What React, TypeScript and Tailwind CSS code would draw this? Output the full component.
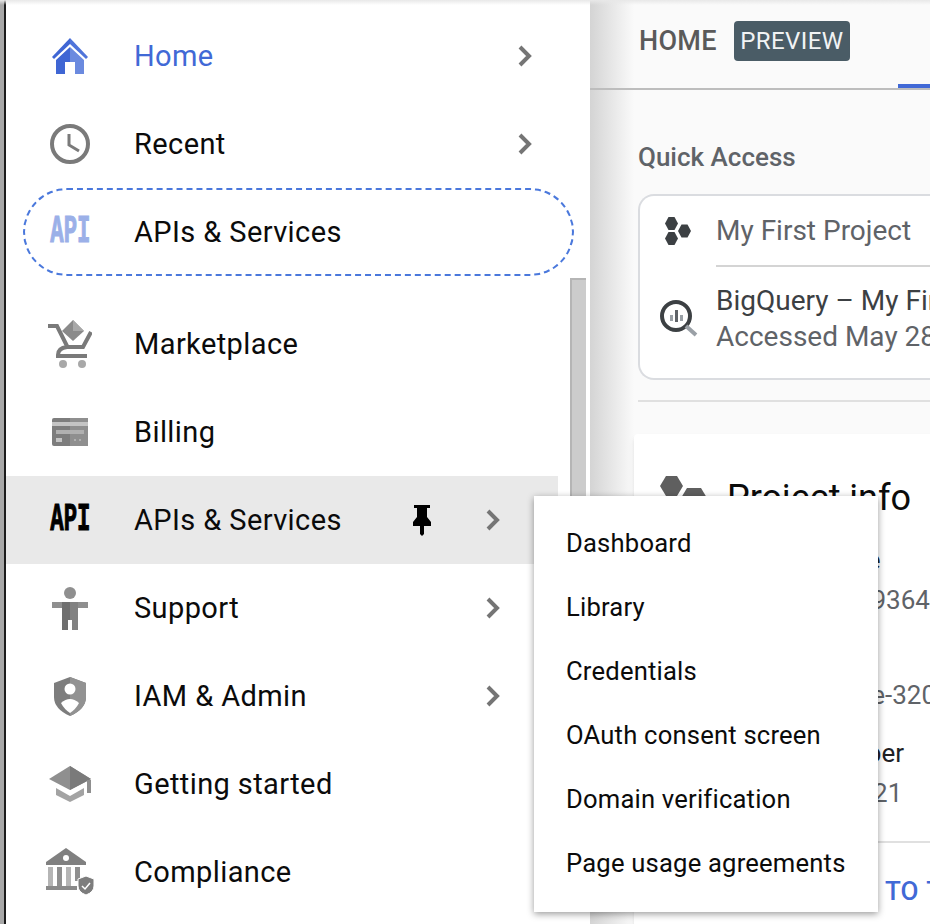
import React from 'react';

const menuItems = ['Dashboard', 'Library', 'Credentials', 'OAuth consent screen', 'Domain verification', 'Page usage agreements'];

const HomeIcon = () => (
  <svg width="36" height="36" viewBox="0 0 36 36">
    <path d="M18 0 L0 19 L2 21 L18 6 Z" fill="#3f66d4" />
    <path d="M18 0 L36 19 L34 21 L18 6 Z" fill="#4f74da" />
    <path d="M18 9 L4 22 V36 H13 V24 H18 Z" fill="#3f66d4" />
    <path d="M18 9 L32 22 V36 H23 V24 H18 Z" fill="#6b8adf" />
  </svg>
);

const ClockIcon = () => (
  <svg width="40" height="40" viewBox="0 0 40 40" fill="none" stroke="#7a7a7a">
    <circle cx="20" cy="20" r="18" strokeWidth="4" />
    <path d="M19 10 V21 L29 27" strokeWidth="3" />
  </svg>
);

const ApiGlyph = ({ color }: { color: string }) => (
  <span
    className="font-['Liberation_Mono',monospace] text-[36px] leading-none font-bold scale-x-[0.62] scale-y-[1.08] [-webkit-text-stroke:1px_currentColor]"
    style={{ color }}
  >
    API
  </span>
);

const CartIcon = () => (
  <svg width="44" height="48" viewBox="0 0 44 48">
    <path d="M25 0 L36 11 L25 21 L14 11 Z" fill="#8a8a8a" />
    <path d="M25 0 L36 11 L25 11 Z" fill="#a8a8a8" />
    <path d="M0 6 H9 L19 26" fill="none" stroke="#7a7a7a" strokeWidth="4" />
    <path d="M43 12 L35 27 H19 Q10 28 10 35 V36 H39" fill="none" stroke="#7a7a7a" strokeWidth="4" />
    <circle cx="15" cy="44" r="4" fill="#a8a8a8" />
    <circle cx="34" cy="44" r="4" fill="#a8a8a8" />
  </svg>
);

const BillingIcon = () => (
  <svg width="36" height="28" viewBox="0 0 36 28">
    <rect width="36" height="28" rx="2" fill="#7d7d7d" />
    <rect x="18" width="18" height="28" fill="#8f8f8f" />
    <rect y="4" width="36" height="4" fill="#c4c4c4" />
    <rect x="4" y="12" width="28" height="4" fill="#b0b0b0" />
    <rect x="4" y="20" width="6" height="4" fill="#c4c4c4" />
    <rect x="22" y="21" width="2" height="2" fill="#b0b0b0" />
    <rect x="27" y="21" width="2" height="2" fill="#b0b0b0" />
  </svg>
);

const SupportIcon = () => (
  <svg width="36" height="43" viewBox="0 0 36 43">
    <circle cx="18" cy="6" r="6" fill="#8f8f8f" />
    <rect y="15" width="36" height="6" fill="#8f8f8f" />
    <path d="M10 15 H18 V43 H10 Z" fill="#6f6f6f" />
    <path d="M18 15 H26 V43 H18 Z" fill="#828282" />
    <rect x="16" y="33" width="4" height="10" fill="#ffffff" />
  </svg>
);

const ShieldIcon = () => (
  <svg width="32" height="39" viewBox="0 0 32 39">
    <path d="M16 0 L32 6 V20 Q32 32 16 39 Q0 32 0 20 V6 Z" fill="#7d7d7d" />
    <path d="M16 0 L32 6 V20 Q32 32 16 39 Z" fill="#929292" />
    <circle cx="16" cy="12" r="5.5" fill="#ffffff" />
    <path d="M7 26 Q16 18 25 26 Q22 32 16 36 Q10 32 7 26 Z" fill="#ffffff" />
  </svg>
);

const CapIcon = () => (
  <svg width="42" height="36" viewBox="0 0 42 36">
    <path d="M21 0 L42 13 L21 24 L0 13 Z" fill="#8f8f8f" />
    <path d="M21 0 L42 13 L21 24 Z" fill="#7a7a7a" />
    <path d="M7 22 L21 30 L35 22 V29 L21 36 L7 29 Z" fill="#a3a3a3" />
    <rect x="38" y="14" width="4" height="13" fill="#8f8f8f" />
  </svg>
);

const ComplianceIcon = () => (
  <svg width="48" height="48" viewBox="0 0 48 48">
    <path d="M20 0 L40 14 V17 H0 V14 Z" fill="#808080" />
    <circle cx="20" cy="10" r="3" fill="#ffffff" />
    <rect x="2" y="19" width="5" height="19" fill="#b5b5b5" />
    <rect x="11" y="19" width="5" height="19" fill="#8f8f8f" />
    <rect x="20" y="19" width="5" height="19" fill="#b5b5b5" />
    <rect x="29" y="19" width="5" height="14" fill="#8f8f8f" />
    <rect y="38" width="31" height="4" fill="#8a8a8a" />
    <path d="M40 28 L48 31 V38 Q48 44 40 47 Q32 44 32 38 V31 Z" fill="#7d7d7d" stroke="#ffffff" strokeWidth="1" />
    <path d="M36 38 L39 41 L44 35" fill="none" stroke="#ffffff" strokeWidth="1.5" />
  </svg>
);

const PinIcon = () => (
  <svg width="20" height="31" viewBox="0 0 20 31">
    <path d="M2 0 H18 V3 H15 V12 L19 17 V21 H12 V29 L10 31 L8 29 V21 H1 V17 L5 12 V3 H2 Z" fill="#000000" />
  </svg>
);

const Chevron = () => (
  <svg width="16" height="22" viewBox="0 0 16 22" fill="none" stroke="#757575" strokeWidth="4">
    <path d="M3 2 L12 11 L3 20" />
  </svg>
);

const HexIcon = () => (
  <svg width="26" height="28" viewBox="0 0 26 28" fill="#3c4043">
    <path d="M0 6.5 L3.5 0 H9.5 L13 6.5 L9.5 13 H3.5 Z" />
    <path d="M0 6.5 L3.5 0 H9.5 L13 6.5 L9.5 13 H3.5 Z" transform="translate(0 15)" />
    <path d="M0 6.5 L3.5 0 H9.5 L13 6.5 L9.5 13 H3.5 Z" transform="translate(13 7.5)" />
  </svg>
);

const BigQueryIcon = () => (
  <svg width="38" height="38" viewBox="0 0 38 38" fill="none">
    <circle cx="16" cy="16" r="14" stroke="#3c4043" strokeWidth="4" />
    <path d="M26 26 L36 35" stroke="#9aa0a6" strokeWidth="4" />
    <rect x="15" y="10" width="3" height="12" fill="#5f6368" />
    <rect x="10" y="15" width="3" height="6" fill="#9aa0a6" />
    <rect x="20" y="15" width="3" height="6" fill="#9aa0a6" />
  </svg>
);

const NavRow = ({
  icon,
  label,
  active,
  pin,
  chevron,
  hover,
}: {
  icon: React.ReactNode;
  label: string;
  active?: boolean;
  pin?: boolean;
  chevron?: 'near' | 'far';
  hover?: boolean;
}) => (
  <div className={`h-[88px] flex items-center w-[552px] ${hover ? 'bg-[#e9e9e9]' : ''}`}>
    <div className="w-[128px] flex justify-center shrink-0">{icon}</div>
    <span className={`text-[29px] leading-none tracking-[0.4px] ${active ? 'text-[#4169d6]' : 'text-[#0b0b0b]'}`}>{label}</span>
    <div className="flex-1" />
    {pin && <div className="mr-[53px] flex items-center"><PinIcon /></div>}
    {chevron === 'far' && <div className="mr-[57px]"><Chevron /></div>}
    {chevron === 'near' && <div className="mr-[25px]"><Chevron /></div>}
  </div>
);

const InfoPair = ({ label, value, className }: { label: string; value: string; className?: string }) => (
  <div className={`whitespace-nowrap text-[26px] leading-[40px] ${className ?? ''}`}>
    <div className="text-[#202124]">{label}</div>
    <div className="text-[#5f6368]">{value}</div>
  </div>
);

export default function App() {
  return (
    <div className="relative flex h-[924px] w-[930px] overflow-hidden bg-white font-['Roboto',sans-serif]">
      {/* window edge */}
      <div className="w-[6px] shrink-0 border-r-2 border-[#1c1c1c] bg-[#a8a8a8]" />

      {/* nav drawer */}
      <div className="relative w-[584px] shrink-0 bg-white pt-3">
        <NavRow icon={<HomeIcon />} label="Home" active chevron="near" />
        <NavRow icon={<ClockIcon />} label="Recent" chevron="near" />
        <div className="relative">
          <NavRow icon={<ApiGlyph color="#9bb0e8" />} label="APIs & Services" />
          <div className="absolute left-[17px] top-0 h-[88px] w-[551px] rounded-[44px] border-2 border-dashed border-[#4a78dc]" />
        </div>
        <div className="h-6" />
        <NavRow icon={<CartIcon />} label="Marketplace" />
        <NavRow icon={<BillingIcon />} label="Billing" />
        <NavRow icon={<ApiGlyph color="#000000" />} label="APIs & Services" pin chevron="far" hover />
        <NavRow icon={<SupportIcon />} label="Support" chevron="far" />
        <NavRow icon={<ShieldIcon />} label="IAM & Admin" chevron="far" />
        <NavRow icon={<CapIcon />} label="Getting started" />
        <NavRow icon={<ComplianceIcon />} label="Compliance" />
        {/* scrollbar */}
        <div className="absolute right-[4px] top-[278px] h-[400px] w-[16px] border-l-2 border-t-2 border-[#b5b5b5] bg-[#cccccc]" />
      </div>

      {/* main content */}
      <div className="relative flex-1 min-w-0 bg-[#fafafa]">
        <div className="absolute inset-y-0 left-0 w-[44px] bg-linear-to-r from-[#d4d4d4] to-transparent" />
        <div className="relative h-[90px] border-b-2 border-[#bdbdbd] pl-[49px] flex items-start">
          <div className="flex items-center h-[40px] mt-[21px]">
            <span className="text-[27px] font-medium tracking-[0.3px] text-[#5a5a5a]">HOME</span>
            <span className="ml-[17px] h-[40px] w-[116px] rounded bg-[#4a5c66] text-[24px] leading-[40px] tracking-[0.4px] text-center text-[#f1f3f4]">PREVIEW</span>
          </div>
          <div className="absolute left-[308px] right-0 bottom-0 h-[4px] bg-[#4169d6]" />
        </div>
        <div className="relative pl-[48px] pt-[52px]">
          <div className="text-[26px] leading-[30px] font-medium text-[#5f6368]">Quick Access</div>
          <div className="mt-[22px] h-[186px] w-[400px] rounded-[16px] border-2 border-r-0 border-[#dadce0] bg-white">
            <div className="flex h-[69px] items-center">
              <div className="w-[76px] shrink-0 pl-[25px]"><HexIcon /></div>
              <span className="text-[28px] text-[#5f6368]">My First Project</span>
            </div>
            <div className="ml-[76px] h-[2px] bg-[#d4d4d4]" />
            <div className="flex items-center pt-[16px]">
              <div className="w-[76px] shrink-0 pl-[20px]"><BigQueryIcon /></div>
              <div className="whitespace-nowrap text-[28px] leading-[36px]">
                <div className="text-[#3c4043]">BigQuery – My First Project</div>
                <div className="text-[#5f6368]">Accessed May 28</div>
              </div>
            </div>
          </div>
          <div className="mt-[20px] h-[2px] bg-[#e0e0e0]" />
          <div className="-ml-[4px] mt-[32px] h-[500px] w-[400px] rounded-t-sm bg-white shadow-md pt-[36px]">
            <div className="flex items-center h-[56px] pl-[26px]">
              <svg width="48" height="38" viewBox="0 0 48 38" fill="#5f5f5f" className="shrink-0 self-start mt-[6px]">
                <path d="M0 10 L6 0 H17 L23 10 L17 20 H6 Z" />
                <path d="M21 22 L27 12 H41 L47 22 L41 36 H27 Z" />
              </svg>
              <span className="ml-[19px] text-[36px] text-[#0b0b0b] whitespace-nowrap">Project info</span>
            </div>
            <div className="pl-[93px] pt-[14px]">
              <InfoPair label="Project name" value="My Project 19364" />
              <InfoPair className="mt-[15px]" label="Project ID" value="my-project-1e-320" />
              <InfoPair className="mt-[18px]" label="Project number" value="123456789021" />
            </div>
            <div className="mt-[28px] h-[2px] bg-[#e0e0e0]" />
            <div className="pl-[89px] pt-[30px] text-[26px] leading-[36px] font-medium text-[#4169d6] whitespace-nowrap [word-spacing:2px]">
              ADD PEOPLE TO THIS PROJECT
            </div>
          </div>
        </div>
      </div>

      {/* top edge shadow */}
      <div className="absolute inset-x-0 top-0 h-[5px] bg-linear-to-b from-[#e8e8e8] to-transparent" />

      {/* flyout menu */}
      <div className="absolute left-[534px] top-[496px] w-[344px] bg-white pt-[15px] pb-[17px] shadow-[0_2px_7px_rgba(0,0,0,0.4)]">
        {menuItems.map((item) => (
          <div key={item} className="h-[64px] pl-[32px] flex items-center text-[25.6px] tracking-[0.2px] text-[#0b0b0b] whitespace-nowrap">
            {item}
          </div>
        ))}
      </div>
    </div>
  );
}
